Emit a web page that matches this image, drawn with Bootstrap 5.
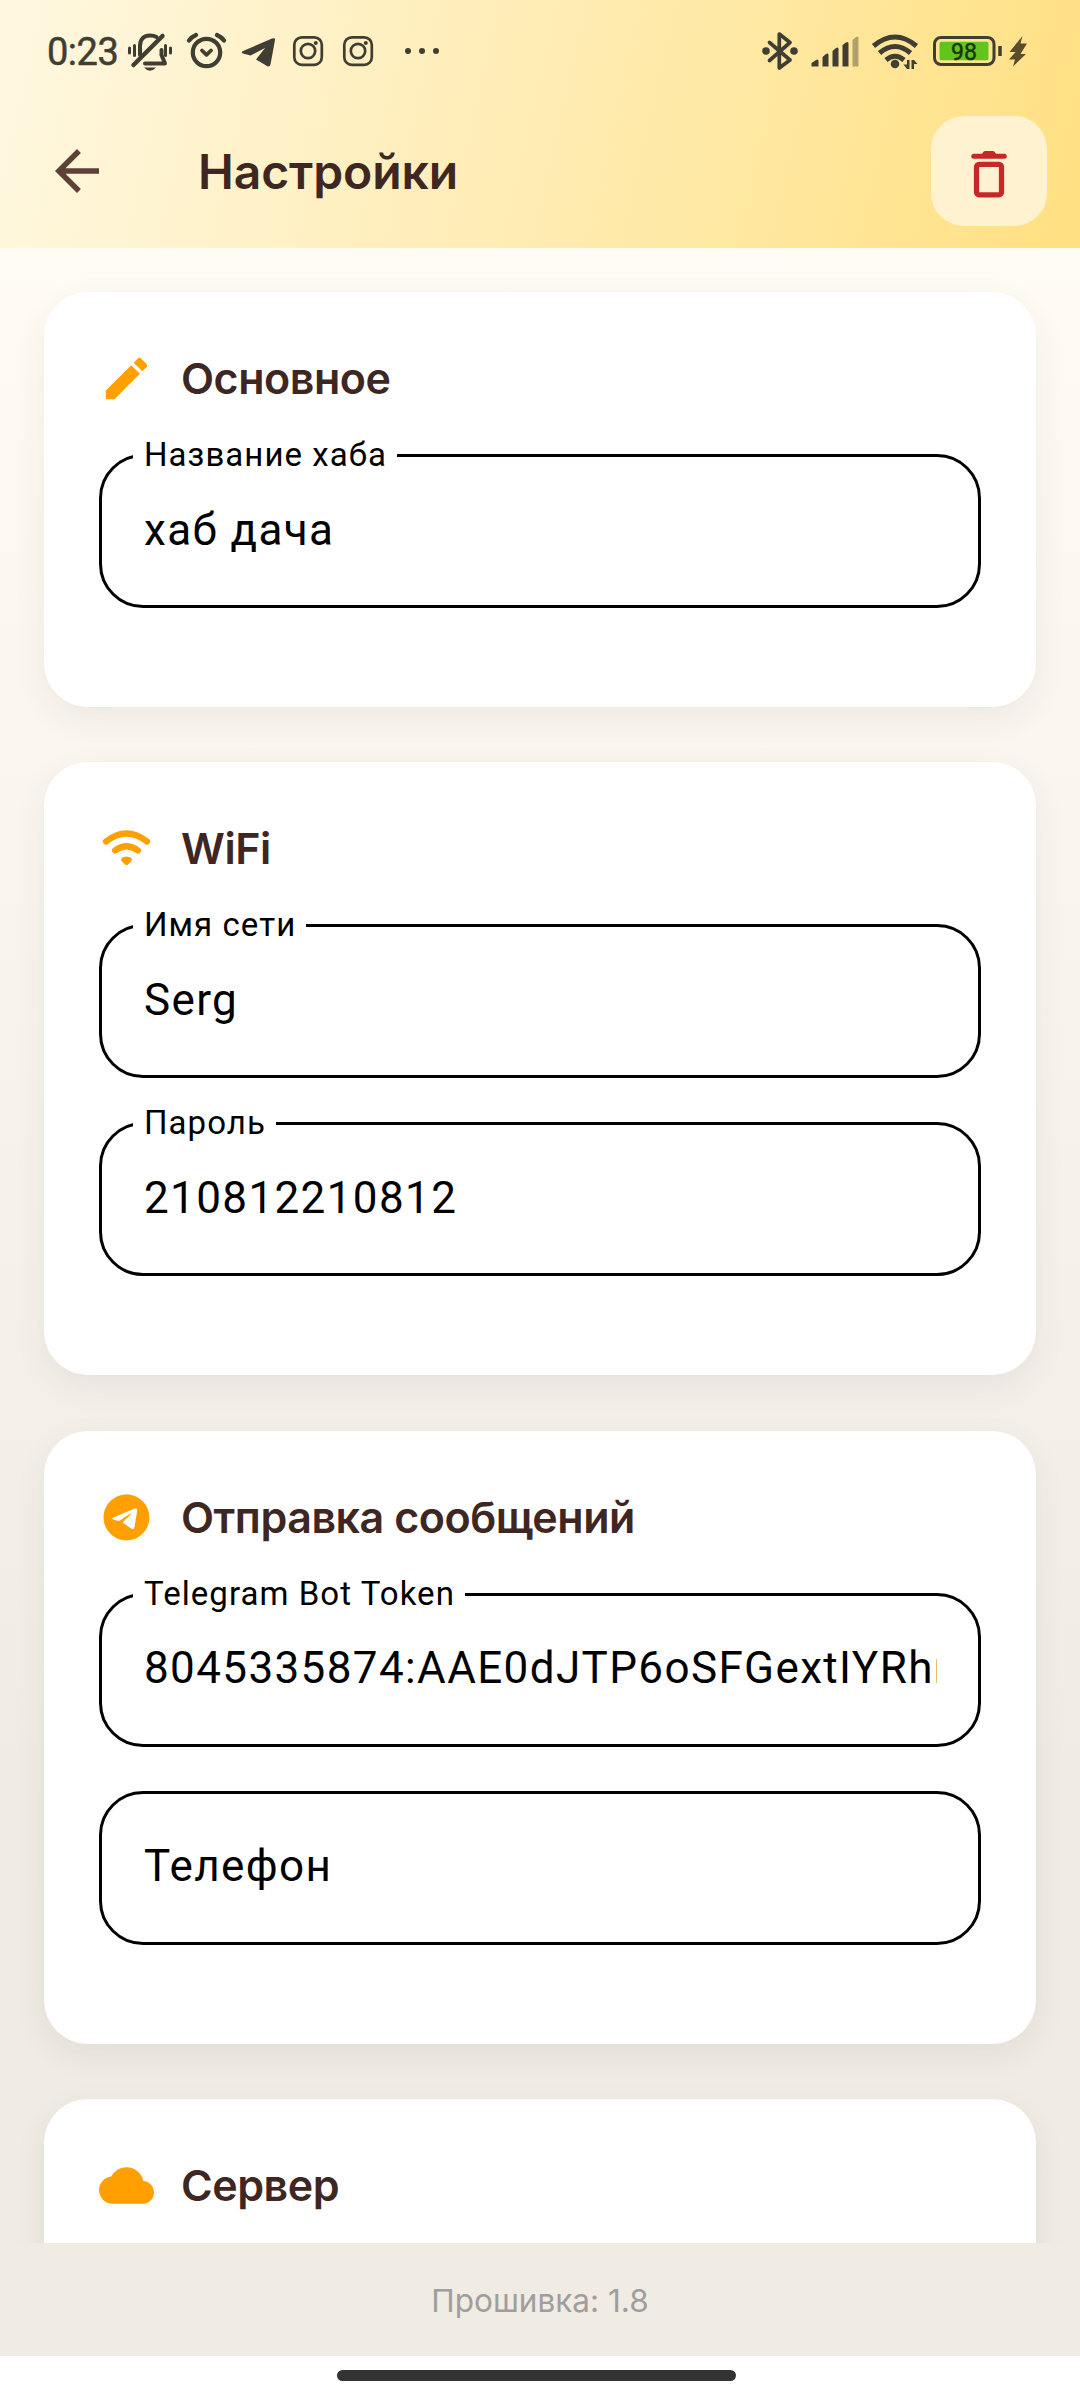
<!DOCTYPE html>
<html lang="ru">
<head>
<meta charset="utf-8">
<meta name="viewport" content="width=device-width, initial-scale=1">
<title>Настройки</title>
<link rel="stylesheet" href="https://cdn.jsdelivr.net/npm/bootstrap@5.3.0/dist/css/bootstrap.min.css">
<style>
  html, body { height: 2400px; margin: 0; overflow: hidden; background: #fff; }
  body { font-family: Roboto, sans-serif; color: #000; }
  svg { display: block; flex: none; }
  .screen { height: 2356px; background: linear-gradient(180deg, #fffcf4 10%, #faf5ef 35%, #f0ebe4 76%, #f0ebe3 100%); }
  .topbar { height: 248px; background: linear-gradient(102.93deg, #fff8e1 0%, #ffecb3 50%, #ffe082 100%); }
  .statusbar { height: 103px; padding-left: 47px; color: #403e33; }
  .clock { font-size: 38px; line-height: 1; font-weight: 400; letter-spacing: -.5px; -webkit-text-stroke: .5px #403e33; }
  .appbar { height: 136px; padding: 0 33px 0 44px; }
  .page-title { font: 600 48px/1 Inter, sans-serif; color: #3e2723; margin-left: 88px; padding-top: 2px; letter-spacing: -.1px; }
  .btn-del { width: 116px; height: 110px; border-radius: 33px; background: #fff2d0; border: 0; }
  .content { padding: 44px 44px 0; gap: 55.3px; height: 1995px; overflow: hidden; }
  .panel { background: #fff; border-radius: 44px; padding: 55px; box-shadow: 0 11px 33px rgba(62,50,35,.07); }
  .panel-h { height: 63px; gap: 27px; margin-bottom: 44px; }
  .panel-h h2 { font: 600 43px/1 Inter, sans-serif; letter-spacing: -.46px; color: #3e2723; margin: 0; }
  .fld { height: 154px; border: 3px solid #000; border-radius: 44px; padding: 0 41px 3px 42px; margin-bottom: 44px; }
  .fld .cap { left: 31px; top: -25px; height: 46px; line-height: 46px; padding: 0 10px 0 11px; background: #fff; font-size: 33px; letter-spacing: 1.05px; white-space: nowrap; }
  .fld .val { font-size: 44px; line-height: 60px; letter-spacing: 1.375px; white-space: nowrap; overflow: hidden; }
  .firmware { height: 113px; padding-top: 2px; font: 400 31.500px/1 Inter, sans-serif; color: #9e9e9e; }
  .gesture { height: 44px; padding: 14px 7px 0 0; background: #fff; }
  .gesture span { width: 399px; height: 11px; border-radius: 6px; background: #333; }
</style>
<script src="https://cdn.jsdelivr.net/npm/bootstrap@5.3.0/dist/js/bootstrap.bundle.min.js"></script>
</head>
<body>
<div class="screen d-flex flex-column">
  <header class="topbar flex-shrink-0">
    <div class="statusbar d-flex align-items-center">
      <span class="clock">0:23</span>
      <svg class="ms-auto" width="954" height="103" viewBox="126 0 954 103" fill="none" stroke="#403e33" stroke-linecap="round" stroke-linejoin="round">
        <!-- muted bell -->
        <g stroke-width="3">
          <path d="M129.500 48v5M134.500 45.500v10M165.500 45.500v10M170.500 48v5"/>
          <path stroke-width="4" d="M140 55V46C140 39 144 35.500 150 35.500Q154 35.500 156.500 37M161.500 50V55L165 63.500H145"/>
          <path stroke-width="4.500" d="M162.500 36L133.500 65"/>
        </g>
        <path d="M144 67.500H156Q150 74 144 67.500Z" fill="#403e33" stroke="none"/>
        <!-- alarm -->
        <g stroke-width="4.200"><circle cx="206.500" cy="52.500" r="13.700"/><path stroke-width="3.800" d="M202 50.500L206.500 54.800L211 50.500"/><path stroke-width="4.300" d="M189 40.500Q191.500 37 196 35M217 35Q221.500 37 224 40.500"/></g>
        <!-- telegram plane -->
        <path stroke="none" fill="#403e33" d="M243 51L272 38.500Q275.500 37.500 275 40L270.500 64.500Q269.500 67.500 267 66L256 59.500L265 48L250.500 55.500L243 53.500Q240.500 52.500 243 51Z"/>
        <!-- instagram -->
        <g id="ig" stroke-width="2.700"><rect x="294.300" y="37.300" width="27.500" height="27.500" rx="7.500"/><circle cx="308" cy="51" r="7.200"/><circle cx="315.800" cy="43" r="2" fill="#403e33" stroke="none"/></g>
        <use href="#ig" x="50"/>
        <g fill="#403e33" stroke="none"><circle cx="408" cy="51" r="3"/><circle cx="422" cy="51" r="3"/><circle cx="436" cy="51" r="3"/></g>
        <!-- bluetooth -->
        <path stroke-width="3.700" d="M769.500 42.500L790 60L779.300 68V34L790 42.500L769.500 60.500"/>
        <g fill="#403e33" stroke="none"><circle cx="766" cy="51" r="3.800"/><circle cx="794" cy="51" r="3.800"/></g>
        <!-- signal -->
        <g fill="#403e33" stroke="none"><path d="M811.500 63L816 60Q818.500 58.500 818.500 61V66.500H811.500ZM822.500 57L826 54Q828.500 52.500 828.500 55V66.500H822.500ZM832.500 51L836 48Q838.500 46.500 838.500 49V66.500H832.500ZM842.500 45L846 42.500Q848.500 41 848.500 43.500V66.500H842.500Z"/><path fill="#b3a06a" d="M852.500 40L856 37Q858.500 35.500 858.500 38V66.500H852.500Z"/></g>
        <!-- wifi -->
        <g stroke-width="5" stroke-linecap="butt"><path d="M873.500 46Q895 28 916.500 46"/><path d="M879.500 53Q895 40 910.500 53"/><path d="M886 60Q895 52.500 904 60"/></g>
        <circle cx="895" cy="64" r="4.300" fill="#403e33" stroke="none"/>
        <path fill="#403e33" stroke="none" d="M907 60H909.500V69H907L903.500 64.500H907ZM911.500 69V60H914L917.500 64H914V69Z"/>
        <!-- battery -->
        <rect x="934.500" y="37.500" width="59.500" height="27" rx="6.500" stroke-width="3"/>
        <rect x="939.500" y="41.700" width="49" height="18.500" rx="1.500" fill="#62c51d" stroke="none"/>
        <path stroke-width="3.500" stroke-linecap="butt" d="M1000 46V56"/>
        <text x="964" y="60" text-anchor="middle" font-family="Roboto" font-weight="400" font-size="23" fill="#1d350c" stroke="#1d350c" stroke-width=".5">98</text>
        <path fill="#5a4d2c" stroke="none" d="M1022.500 36L1009.500 52H1015.500L1009 59.500H1015L1013 66.500L1026 54H1020.500L1027 43.500H1020.500Z"/>
      </svg>
    </div>
    <div class="appbar d-flex align-items-center">
      <svg width="66" height="66" viewBox="0 0 24 24" fill="#5d4037"><path d="M20 11H7.830l5.590-5.590L12 4l-8 8 8 8 1.410-1.410L7.830 13H20v-2z"/></svg>
      <h1 class="page-title mb-0">Настройки</h1>
      <button class="btn btn-del ms-auto d-flex align-items-center justify-content-center p-0 pt-1" aria-label="Удалить">
        <svg width="60" height="60" viewBox="0 0 24 24" fill="none" stroke="#c62828"><path stroke-width="2" stroke-linecap="round" stroke-linejoin="round" d="M5.900 5.300H18.100"/><path fill="#c62828" stroke="none" d="M8.800 5L9.700 3.600Q10 3.200 10.500 3.200H13.500Q14 3.200 14.300 3.600L15.200 5Z"/><rect x="7" y="8.500" width="10" height="12.200" rx="1" stroke-width="2.100"/></svg>
      </button>
    </div>
  </header>

  <main class="content d-flex flex-column">
    <section class="panel flex-shrink-0">
      <div class="panel-h d-flex align-items-center">
        <svg width="55" height="55" viewBox="0 0 24 24" fill="#ffa000"><path d="M3 17.250V21h3.750L17.810 9.940l-3.750-3.750L3 17.250zM20.710 7.040c.39-.39.39-1.020 0-1.410l-2.340-2.340c-.39-.39-1.020-.39-1.410 0l-1.830 1.830 3.750 3.750 1.830-1.830z"/></svg>
        <h2>Основное</h2>
      </div>
      <div class="fld position-relative d-flex align-items-center"><span class="cap position-absolute">Название хаба</span><span class="val">хаб дача</span></div>
    </section>

    <section class="panel flex-shrink-0">
      <div class="panel-h d-flex align-items-center">
        <svg width="55" height="55" viewBox="0 0 55 55" fill="none" stroke="#ffa000" stroke-width="6.200" stroke-linecap="round"><path d="M7 20.500Q27.500 4.500 48 20.500M16 29.500Q27.500 21 39 29.500"/><path fill="#ffa000" stroke="none" d="M22.500 37Q27.500 34 32.500 37Q33.500 39 32 40.500L29 43.500Q27.500 45 26 43.500L23 40.500Q21.500 39 22.500 37Z"/></svg>
        <h2>WiFi</h2>
      </div>
      <div class="fld position-relative d-flex align-items-center"><span class="cap position-absolute">Имя сети</span><span class="val">Serg</span></div>
      <div class="fld position-relative d-flex align-items-center"><span class="cap position-absolute">Пароль</span><span class="val">210812210812</span></div>
    </section>

    <section class="panel flex-shrink-0">
      <div class="panel-h d-flex align-items-center">
        <svg width="55" height="55" viewBox="0 0 24 24" fill="#ffa000"><path d="M12 2C6.480 2 2 6.480 2 12s4.480 10 10 10 10-4.480 10-10S17.520 2 12 2zm4.640 6.800c-.15 1.580-.8 5.420-1.130 7.190-.14.750-.42 1-.68 1.030-.58.050-1.020-.38-1.580-.75-.88-.58-1.380-.94-2.230-1.500-.99-.65-.35-1.010.22-1.590.15-.15 2.710-2.480 2.760-2.690.01-.03.010-.12-.05-.18-.06-.05-.14-.03-.21-.02-.09.020-1.490.95-4.220 2.790-.4.270-.76.410-1.080.4-.36-.01-1.040-.2-1.550-.37-.63-.2-1.120-.31-1.080-.66.020-.18.270-.36.740-.55 2.920-1.270 4.860-2.110 5.830-2.510 2.780-1.160 3.350-1.360 3.730-1.360.08 0 .27.020.39.120.1.080.13.190.14.270-.01.060.01.240 0 .38z"/></svg>
        <h2>Отправка сообщений</h2>
      </div>
      <div class="fld position-relative d-flex align-items-center"><span class="cap position-absolute">Telegram Bot Token</span><span class="val">8045335874:AAE0dJTP6oSFGextIYRhn</span></div>
      <div class="fld position-relative d-flex align-items-center"><span class="val">Телефон</span></div>
    </section>

    <section class="panel flex-shrink-0">
      <div class="panel-h d-flex align-items-center">
        <svg width="55" height="55" viewBox="0 0 24 24" fill="#ffa000"><path d="M19.350 10.040C18.670 6.590 15.640 4 12 4 9.110 4 6.600 5.640 5.350 8.040 2.340 8.360 0 10.910 0 14c0 3.310 2.690 6 6 6h13c2.760 0 5-2.240 5-5 0-2.640-2.050-4.780-4.650-4.960z"/></svg>
        <h2>Сервер</h2>
      </div>
      <div class="fld"></div>
    </section>
  </main>

  <footer class="firmware flex-shrink-0 d-flex align-items-center justify-content-center">Прошивка: 1.8</footer>
</div>
<div class="gesture d-flex justify-content-center align-items-start"><span></span></div>
</body>
</html>
